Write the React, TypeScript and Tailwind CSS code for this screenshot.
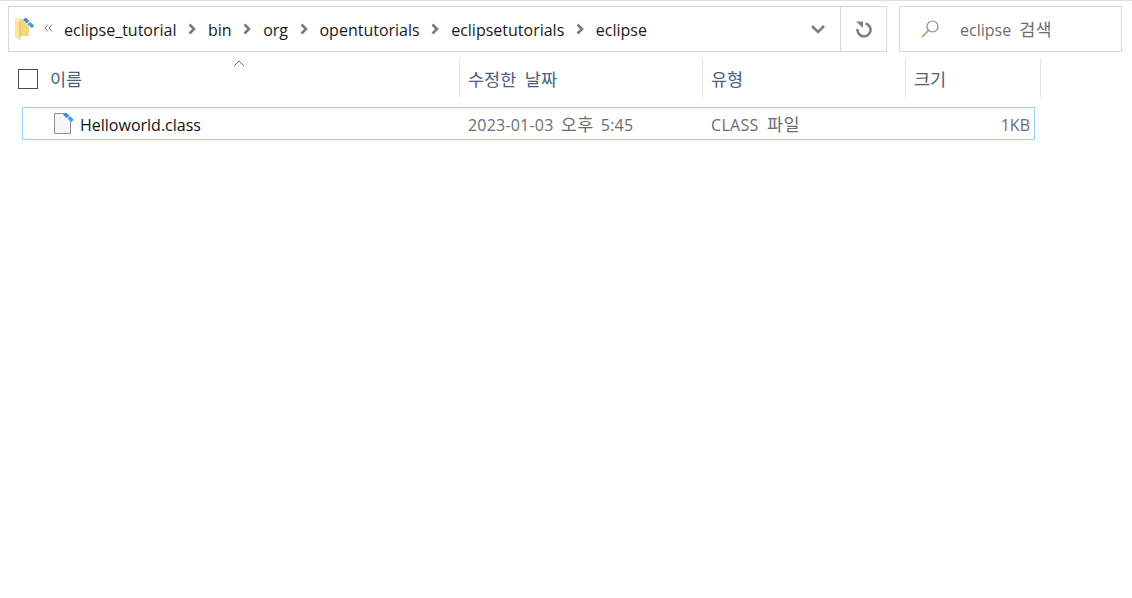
import React from "react";

const font = { fontFamily: '"Open Sans", "Noto Sans CJK KR", sans-serif' };

const crumbs = ["bin", "org", "opentutorials", "eclipsetutorials", "eclipse"];

const Chevron = () => (
  <svg width="10" height="14" viewBox="0 0 10 14" className="mx-[10.75px] shrink-0">
    <path d="M2.5 2.5 L7 7 L2.5 11.5" fill="none" stroke="#7a7a7a" strokeWidth="2.6" />
  </svg>
);

const FolderIcon = () => (
  <svg width="20" height="22" viewBox="0 0 20 22" className="shrink-0">
    <path d="M0 1 H8 L9 2.5 H14 V18 H4 V2 Z" fill="#f6d680" />
    <path d="M0 1 L4.5 4 V22 L0 19 Z" fill="#fbe6a6" />
    <path d="M4.5 4 L5.5 4 V20 L4.5 22 Z" fill="#e3b95a" />
    <path d="M9.5 0.5 L13 4" stroke="#2f8fe6" strokeWidth="3.4" />
    <path d="M14 5 L18 9" stroke="#3f9eee" strokeWidth="3.4" />
  </svg>
);

const FileIcon = () => (
  <svg width="20" height="22" viewBox="0 0 20 22" className="shrink-0">
    <path d="M0.5 0.5 H12 L16.5 5 V20.5 H0.5 Z" fill="#f5f6f8" stroke="#8f8f8f" />
    <path d="M10.5 0.5 L14 4" stroke="#2f8fe6" strokeWidth="3.6" />
    <path d="M15 4.5 L18.5 8" stroke="#3f9eee" strokeWidth="3.6" />
  </svg>
);

// hangul in the source font is wider than Noto's, so it gets a bigger size
const Ko = ({ children }: { children: React.ReactNode }) => (
  <span className="text-[17.5px] leading-none">{children}</span>
);

function HeaderCell({ width, children }: { width: string; children: React.ReactNode }) {
  return (
    <div className={`${width} h-[39px] flex items-center border-r border-[#e5e5e5] pl-[8px] pt-0.5 text-[#4c607a] shrink-0 [word-spacing:4px]`}>
      <span>{children}</span>
    </div>
  );
}

export default function App() {
  return (
    <div className="w-[1132px] h-[598px] bg-white overflow-hidden text-[16px]" style={font}>
      <div className="h-px bg-[#dedede]" />

      {/* address bar + search */}
      <div className="flex pl-2 pt-[5px] gap-3">
        <div className="w-[879px] h-[46px] border border-[#d9d9d9] flex items-center shrink-0">
          <div className="ml-[6px]">
            <FolderIcon />
          </div>
          <svg width="9" height="8" viewBox="0 0 9 8" className="ml-[9px] mb-0.5 shrink-0">
            <path d="M4 0.5 L1 4 L4 7.5 M8 0.5 L5 4 L8 7.5" fill="none" stroke="#7a7a7a" />
          </svg>
          <span className="ml-[11px] pt-0.5 text-[#1a1a1a]">eclipse_tutorial</span>
          {crumbs.map((c) => (
            <React.Fragment key={c}>
              <Chevron />
              <span className="pt-0.5 text-[#1a1a1a]">{c}</span>
            </React.Fragment>
          ))}
          <div className="ml-auto flex items-center h-full">
            <svg width="16" height="10" viewBox="0 0 16 10" className="mr-[14px]">
              <path d="M2 2 L8 8 L14 2" fill="none" stroke="#7f7f7f" strokeWidth="2.6" />
            </svg>
            <div className="w-[46px] h-full border-l border-[#d9d9d9] flex items-center justify-center">
              <svg width="18" height="18" viewBox="0 0 18 18">
                <path d="M10.5 3.6 A6.5 6.5 0 1 1 2.6 9" fill="none" stroke="#7f7f7f" strokeWidth="2.6" />
                <path d="M1 1.5 H8 V8 Z" fill="#7f7f7f" />
              </svg>
            </div>
          </div>
        </div>
        <div className="w-[223px] h-[46px] border border-[#d9d9d9] flex items-center shrink-0">
          <svg width="20" height="20" viewBox="0 0 20 20" className="ml-[20px] shrink-0">
            <circle cx="12.5" cy="7.5" r="5.5" fill="none" stroke="#8a8a8a" strokeWidth="1.2" />
            <path d="M8.5 11.5 L2 18" stroke="#b98a5a" strokeWidth="1.4" />
          </svg>
          <span className="ml-[20px] pt-0.5 text-[#6d6d6d] [word-spacing:4px]">
            eclipse <Ko>검색</Ko>
          </span>
        </div>
      </div>

      {/* column headers */}
      <div className="flex mt-[7px] items-center">
        <div className="w-[460px] h-[39px] flex items-center border-r border-[#e5e5e5] pl-[18px] relative shrink-0 text-[#4c607a]">
          <span className="w-5 h-5 border border-[#4a4a4a] mr-3" />
          <span className="pt-0.5">
            <Ko>이름</Ko>
          </span>
          <svg width="14" height="8" viewBox="0 0 14 8" className="absolute left-[232px] top-0">
            <path d="M2 7 L7 2 L12 7" fill="none" stroke="#6f6f6f" />
          </svg>
        </div>
        <HeaderCell width="w-[243px]"><Ko>수정한 날짜</Ko></HeaderCell>
        <HeaderCell width="w-[203px]"><Ko>유형</Ko></HeaderCell>
        <HeaderCell width="w-[135px]"><Ko>크기</Ko></HeaderCell>
      </div>

      {/* file row */}
      <div className="ml-[22px] mt-[9px] w-[1013px] h-[33px] border border-[#99d1ff] flex items-center">
        <div className="w-[436px] flex items-center pl-[31px] shrink-0 text-[#111]">
          <FileIcon />
          <span className="ml-[6px] pt-0.5">Helloworld.class</span>
        </div>
        <div className="w-[243px] pl-[9px] pt-0.5 text-[#6d6d6d] shrink-0 tracking-[0.2px] [word-spacing:3px]">
          2023-01-03 <Ko>오후</Ko> 5:45
        </div>
        <div className="w-[203px] pl-[9px] pt-0.5 text-[#6d6d6d] shrink-0 tracking-[0.3px] [word-spacing:4px]">
          CLASS <Ko>파일</Ko>
        </div>
        <div className="flex-1 text-right pr-[4px] pt-0.5 text-[#6d6d6d]">1KB</div>
      </div>
    </div>
  );
}
